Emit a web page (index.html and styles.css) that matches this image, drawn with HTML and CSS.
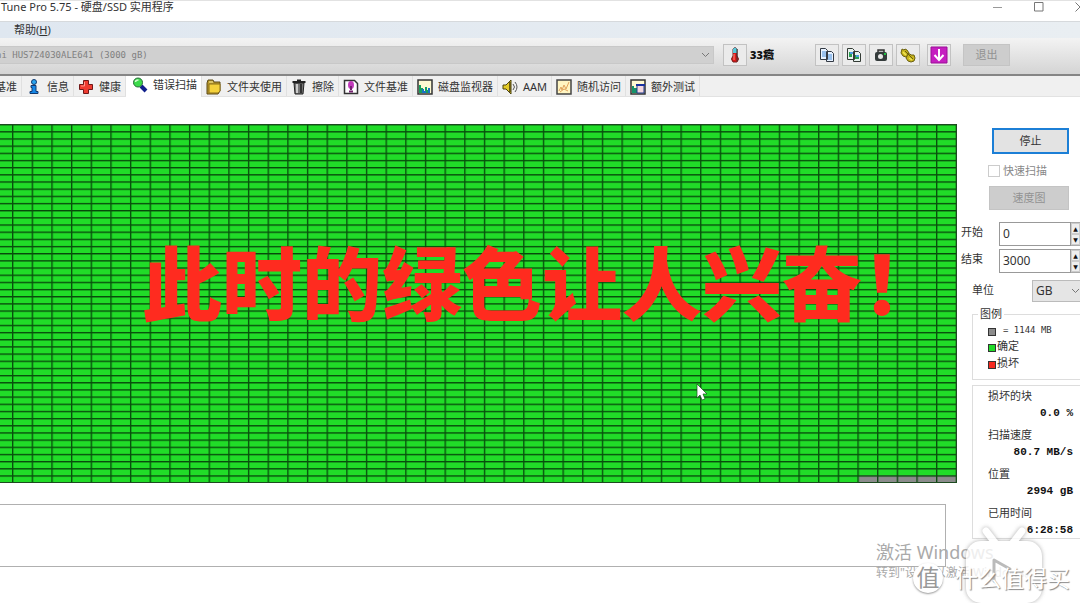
FILE: index.html
```html
<!DOCTYPE html>
<html lang="zh-CN">
<head>
<meta charset="utf-8">
<title>Tune Pro 5.75 - 硬盘/SSD 实用程序</title>
<link rel="stylesheet" href="styles.css">
</head>
<body>
<header class="titlebar">
  <span>Tune Pro 5.75 - 硬盘/SSD 实用程序</span>
  <div class="window-controls">
    <button aria-label="最小化"><svg width="10" height="12" viewBox="0 0 10 12"><path d="M0 6.500h9" stroke="#999"/></svg></button>
    <button aria-label="最大化"><svg width="10" height="12" viewBox="0 0 10 12"><path d="M.5 1.500h8.500v8.500H.5z" fill="none" stroke="#777"/></svg></button>
    <button aria-label="关闭"><svg width="10" height="12" viewBox="0 0 10 12"><path d="M.5 1.500l9 9M9.500 1.500l-9 9" stroke="#777"/></svg></button>
  </div>
</header>
<nav class="menubar"><a href="#help">帮助(<u>H</u>)</a></nav>
<div class="toolbar">
  <select class="drive" aria-label="驱动器" disabled><option>hi HUS724030ALE641 (3000 gB)</option></select>
  <button class="tool thermo" aria-label="温度"><svg width="16" height="18" viewBox="0 0 16 18"><path d="M6 3q2-3 4 0v7q3 3 0 6H6q-3-3 0-6z" fill="#e01818" stroke="#702020"/><path d="M6 3q2-3 4 0v4H6z" fill="#58c8d8"/><path d="M10 3v12" stroke="#333"/><path d="M7 8v6" stroke="#ff9080"/></svg></button>
  <b class="temp">33癓</b>
  <div class="tools">
    <button class="tool" aria-label="复制文本"><svg width="16" height="16" viewBox="0 0 16 16"><path d="M1.500 1.500h5l2 2v9h-7zM7.500 4.500h5l2 2v8h-7z" fill="#e8f2ff" stroke="#333a44"/><path d="M3 5h4M3 7h4M3 9h4M9 8h4M9 10h4M9 12h4" stroke="#4a90dc"/></svg></button>
    <button class="tool" aria-label="复制图像"><svg width="16" height="16" viewBox="0 0 16 16"><path d="M1.500 1.500h5l2 2v9h-7zM7.500 4.500h5l2 2v8h-7z" fill="#e8f2ee" stroke="#333a34"/><path d="M3 5h3v5H3zM9 8h4v4H9z" fill="#28a050"/><path d="M4 5h3v2H4zM10 8h3v2h-3z" fill="#4c9be0"/></svg></button>
    <button class="tool" aria-label="截图"><svg width="16" height="16" viewBox="0 0 16 16"><path d="M5 5V3h6v2" fill="#bbb" stroke="#333" stroke-width="1.500"/><rect x="2" y="5" width="12" height="9" rx="2" fill="#343b3b"/><circle cx="7.500" cy="9.500" r="2.500" fill="#e8e8e8"/><path d="M11 6h2v2h-2z" fill="#20c040"/></svg></button>
    <button class="tool" aria-label="选项"><svg width="16" height="16" viewBox="0 0 16 16"><g fill="#c8b51c" stroke="#6b6010"><path d="M2 2l2 1 1-1 2 1 2 3-1 3-2 1-3-1-2-3z"/><path d="M8 7l2 0 1 1 3 0 1 3-1 3-3 1-3-1-2-3z"/></g><path d="M3 5l3 3M9 11l3 2" stroke="#f0e558" stroke-width="1.500"/><path d="M5 4l5 5M10 9l3 3" stroke="#665c10"/></svg></button>
    <button class="tool save" aria-label="保存"><svg width="18" height="18" viewBox="0 0 18 18"><path d="M1 1h16v16H1z" fill="#c51fc0" stroke="#9b1097"/><path d="M9 3v10M4.500 9l4.500 5 4.500-5" fill="none" stroke="#fff" stroke-width="2"/></svg></button>
  </div>
  <button class="flat exit" disabled>退出</button>
</div>
<nav class="tabs">
  <button class="tab first">基准</button>
  <button class="tab"><svg viewBox="0 0 16 16"><circle cx="8" cy="3" r="2.500" fill="#2aa5f0" stroke="#123a70"/><path d="M5 6.500h5v6h2v2H4v-2h2v-4H5z" fill="#1688e8" stroke="#123a70"/></svg>信息</button>
  <button class="tab"><svg viewBox="0 0 16 16"><path d="M5.500 1.500h5v4h4v5h-4v4h-5v-4h-4v-5h4z" fill="#ee3b30" stroke="#701818"/><path d="M6.500 3v4H3" fill="none" stroke="#ff9688"/></svg>健康</button>
  <button class="tab active"><svg viewBox="0 0 16 16"><path d="M9 9l5 5" stroke="#10208c" stroke-width="4"/><circle cx="6" cy="5.500" r="4.500" fill="#3cdb4a" stroke="#28693a"/><path d="M3.500 5q0-2 3-2" fill="none" stroke="#d2ffd0" stroke-width="1.500"/></svg>错误扫描</button>
  <button class="tab"><svg viewBox="0 0 16 16"><path d="M1 4l1-3h5l1 2h6v9l-2 3H1z" fill="#b8982c" stroke="#5d4a17"/><path d="M3 5h11v7l-2 2H3z" fill="#f5d23b" stroke="#8b701c"/><path d="M3 3h4" stroke="#fff1a0"/></svg>文件夹使用</button>
  <button class="tab"><svg viewBox="0 0 16 16"><path d="M3 4h10l-1 11H4z" fill="#777" stroke="#222"/><path d="M1.500 3h13M6 1.500h4" stroke="#222" stroke-width="2"/><path d="M6 5v9" stroke="#ccc" stroke-width="2"/><path d="M10 5v9" stroke="#333" stroke-width="2"/></svg>擦除</button>
  <button class="tab"><svg viewBox="0 0 16 16"><path d="M1.500 1.500h10l3 3v10h-13z" fill="#fff" stroke="#333" stroke-width="1.500"/><ellipse cx="8" cy="6" rx="3" ry="4" fill="#c13bbb"/><path d="M8 7v4M6 12.500h4" stroke="#752270" stroke-width="2"/></svg>文件基准</button>
  <button class="tab"><svg viewBox="0 0 16 16"><path d="M1 1h14v14H1z" fill="#fff9d2" stroke="#333" stroke-width="1.500"/><path d="M2 14V6h2v3h2v5zM8 14V8h2v3h3v3z" fill="#17a05e"/><path d="M5 14v-4h2v2h2v2zM11 14V9h2v5z" fill="#1872c4"/></svg>磁盘监视器</button>
  <button class="tab"><svg viewBox="0 0 16 16"><path d="M1 6h3l5-5v14l-5-5H1z" fill="#e3ca27" stroke="#4b420d"/><path d="M8 3v10" stroke="#6a5b12" stroke-width="2"/><path d="M11 5q3 3 0 6M13 3q4 5 0 10" fill="none" stroke="#555"/></svg>AAM</button>
  <button class="tab"><svg viewBox="0 0 16 16"><path d="M1 1h14v14H1z" fill="#fff5c2" stroke="#444" stroke-width="1.500"/><path d="M3 12l2-4 1 3 2-5 2 4 3-7M4 13l4-3 4 2" fill="none" stroke="#e0a25b"/></svg>随机访问</button>
  <button class="tab"><svg viewBox="0 0 16 16"><path d="M1 1h14v14H1z" fill="#fff9d2" stroke="#333" stroke-width="1.500"/><path d="M2 14V7h2v2h3v5z" fill="#16936a"/><path d="M7 6h7v8H7z" fill="#f4d8df" stroke="#203d8c"/><path d="M6 6h9" stroke="#1830a0" stroke-width="2"/></svg>额外测试</button>
</nav>
<main class="main">
  <section class="scan">
    <div class="map">
      <svg class="blocks" viewBox="0 0 957 359" preserveAspectRatio="none" role="img" aria-label="扫描图">
        <defs><pattern id="cell" x="12" y="0" width="19.660" height="7.170" patternUnits="userSpaceOnUse"><path d="M.7 7.170V.7H19.660" fill="none" stroke="#07480b" stroke-width="1.300"/></pattern></defs>
        <path d="M0 0h957v359H0z" fill="#21dc28"/>
        <path d="M858.500 351.500H957V359h-98.500z" fill="#8c8c8c"/>
        <path d="M0 0h957v359H0z" fill="url(#cell)"/>
        <path d="M0 .5h956.500v358H0" fill="none" stroke="#1d4a20"/>
      </svg>
      <div class="caption">此时的绿色让人兴奋！</div>
      <svg class="cursor" width="12" height="18" viewBox="0 0 12 18"><path d="M1 1v14l3-3 2 5 3-1-2-5h4z" fill="#fff" stroke="#174d1a" stroke-width=".7"/></svg>
    </div>
    <div class="log"></div>
  </section>
  <aside class="side">
    <button class="stop">停止</button>
    <label class="quick"><input type="checkbox" disabled>快速扫描</label>
    <button class="flat speed" disabled>速度图</button>
    <div class="field"><label for="from">开始</label><input id="from" type="text" value="0"><span class="spin"><button aria-label="开始增加">▲</button><button aria-label="开始减少">▼</button></span></div>
    <div class="field"><label for="to">结束</label><input id="to" type="text" value="3000"><span class="spin"><button aria-label="结束增加">▲</button><button aria-label="结束减少">▼</button></span></div>
    <div class="field unit"><label for="unit">单位</label><select id="unit"><option>GB</option></select></div>
    <fieldset class="legend">
      <legend>图例</legend>
      <div><i class="gray"></i><span class="mono">= 1144 MB</span></div>
      <div><i class="green"></i>确定</div>
      <div><i class="red"></i>损坏</div>
    </fieldset>
    <dl class="stats">
      <dt>损坏的块</dt><dd>0.0 %</dd>
      <dt>扫描速度</dt><dd>80.7 MB/s</dd>
      <dt>位置</dt><dd>2994 gB</dd>
      <dt>已用时间</dt><dd>6:28:58</dd>
    </dl>
  </aside>
</main>
<div class="activate"><p>激活 Windows</p><small>转到"设置"以激活 Windows。</small></div>
<svg class="tv" width="92" height="82" viewBox="0 0 92 82"><g class="tv-body"><path d="M28 8l10 13M64 8L54 21" stroke="#fff" stroke-width="7" stroke-linecap="round"/><rect x="8" y="18" width="76" height="62" rx="15" fill="#fff"/></g><path d="M36 58V37l16 9" fill="none" stroke="#bbb" stroke-width="3" stroke-linecap="round" stroke-linejoin="round"/></svg>
<div class="brand"><span class="badge">值</span><span>什么值得买</span></div>
</body>
</html>
```
FILE: styles.css
```css
* { box-sizing: border-box; }
body {
  margin: 0;
  height: 100vh;
  overflow: hidden;
  position: relative;
  display: flex;
  flex-direction: column;
  background: #fff;
  color: #333;
  font: 11px/16px "Noto Sans", "Noto Sans CJK SC", sans-serif;
}
button, input, select { font: inherit; color: inherit; margin: 0; padding: 0; border-radius: 0; }
button { border: 0; background: none; }
svg { display: block; flex: none; }
select {
  appearance: none;
  background: url("data:image/svg+xml,%3Csvg xmlns='http://www.w3.org/2000/svg' width='9' height='6'%3E%3Cpath d='M1 1l3.500 3.500L8 1' fill='none' stroke='%23777'/%3E%3C/svg%3E") no-repeat right 0 center;
}

.titlebar {
  height: 21px;
  flex: none;
  display: flex;
  justify-content: space-between;
  padding-left: 1px;
  border-top: 1px solid #e2e2e2;
  line-height: 12px;
}
.window-controls { display: flex; gap: 31px; margin-right: -5px; height: 12px; }
.menubar {
  height: 17px;
  flex: none;
  padding-left: 14px;
  background: linear-gradient(90deg, #dfe7f0, #e9eef2);
  border-top: 1px solid #d6d9dc;
  line-height: 16px;
}
.menubar a { color: inherit; text-decoration: none; }
.toolbar {
  height: 38px;
  flex: none;
  display: flex;
  align-items: center;
  padding: 0 70px 2px 0;
  background: linear-gradient(#f3f3f3, #d4d4d4);
  border-bottom: 2px solid #858585;
}
.drive {
  flex: 1;
  height: 18px;
  margin-left: -10px;
  padding-left: 5px;
  border: 1px solid #c8c8c8;
  background-color: #d0d0d0;
  background-position: right 3px center;
  color: #808080;
  opacity: 1;
  font: 9px/16px "DejaVu Sans Mono", monospace;
}
.tool {
  width: 24px;
  height: 22px;
  display: grid;
  place-items: center;
  border: 1px solid #c2c2c2;
  background: #ebebeb;
}
.thermo { margin-left: 9px; }
.temp { width: 68px; padding-left: 3px; color: #111; font-weight: 900; }
.tools { display: flex; gap: 3px; }
.save { margin-left: 4px; }
.flat { background: #cdcdcd; border: 1px solid #c4c4c4; color: #929292; }
.exit { width: 47px; height: 22px; margin-left: 12px; }

.tabs {
  height: 21px;
  flex: none;
  display: flex;
  background: #f0f0f0;
  border-bottom: 1px solid #e2e2e2;
}
.tab {
  display: flex;
  align-items: center;
  gap: 5px;
  padding: 2px 4px 0 4px;
  border-right: 1px solid #e0e0e0;
  white-space: nowrap;
}
.tab svg { width: 16px; height: 16px; }
.first { margin-left: -9px; }
.active { height: 21px; padding: 0 4px 4px 6px; background: #fff; }

.main { flex: 1; min-height: 0; display: flex; }
.scan { flex: 1; min-width: 0; }
.map { position: relative; margin-top: 27px; }
.blocks { width: 100%; height: 359px; }
.caption {
  position: absolute;
  inset: 107px 0 auto 142px;
  color: #ff2b1f;
  font: 900 80px/96px "Noto Sans CJK SC", sans-serif;
  white-space: nowrap;
}
.cursor { position: absolute; left: 696px; top: 259px; }
.log { height: 63px; margin: 21px 11px 0 0; border: 1px solid #b0b0b0; border-left: 0; }

.side { width: 123px; flex: none; padding-top: 31px; overflow: hidden; }
.stop {
  display: block;
  width: 77px;
  height: 26px;
  margin-left: 35px;
  border: 2px solid #1c7fd6;
  background: #e3e3e3;
}
.quick { display: flex; align-items: center; gap: 3px; height: 16px; margin: 9px 0 7px 31px; color: #888; }
.quick input { appearance: none; width: 12px; height: 12px; border: 1px solid #ccc; background: #fff; }
.speed { display: block; width: 80px; height: 24px; margin-left: 32px; }
.field { display: flex; padding-left: 4px; height: 24px; margin-top: 3px; }
.speed + .field { margin-top: 12px; }
.field label { width: 38px; line-height: 20px; flex: none; }
.field input { width: 72px; padding-left: 3px; border: 1px solid #999; font-size: 12px; background: #fff; }
.spin { flex: 1; display: grid; border: 1px solid #aaa; border-width: 1px 0; }
.spin button { border: 1px solid #ccc; background: #eee; font: 6px/8px "DejaVu Sans", sans-serif; color: #111; overflow: hidden; }
.unit { padding-left: 15px; margin-top: 7px; height: 22px; }
.unit label { width: 60px; }
.unit select { flex: 1; min-width: 0; padding-left: 3px; border: 1px solid #bbb; border-right: 0; background-color: #e5e5e5; font-size: 12px; }
.legend { margin: 4px -5px 0 15px; height: 74px; border: 1px solid #ddd; padding: 1px 0 0 15px; min-width: 0; }
.legend legend { margin-left: -10px; padding: 0 2px; }
.legend div { display: flex; align-items: center; gap: 1px; height: 17px; }
.legend div:first-of-type { height: 14px; }
.legend i { width: 8px; height: 8px; margin-top: 4px; border: 1px solid #333; }
.gray { background: #8c8c8c; }
.green { background: #21dc28; }
.red { background: #f52a20; }
.mono { padding-left: 6px; font: 9px/14px "DejaVu Sans Mono", monospace; }
.stats { margin: 5px -5px 0 15px; padding: 2px 11px 0 15px; height: 154px; border: 1px solid #ddd; }
.stats dt { height: 17px; }
.stats dd { margin: 0; height: 22px; text-align: right; color: #111; font: bold 11px/16px "Liberation Mono", monospace; }

.activate { position: absolute; left: 876px; bottom: 21px; color: #aaa; white-space: nowrap; }
.activate p { margin: 0; font-size: 18px; line-height: 24px; }
.activate small { display: block; font-size: 12px; line-height: 18px; }
.tv { position: absolute; left: 958px; bottom: -2px; }
.tv-body { filter: drop-shadow(0 0 2px #999); opacity: .8; }
.brand {
  position: absolute;
  left: 913px;
  bottom: 9px;
  display: flex;
  align-items: center;
  gap: 12px;
  color: #fff;
  font-size: 23px;
  line-height: 32px;
  text-shadow: 1px 1px 1px #888;
  white-space: nowrap;
}
.badge {
  width: 30px;
  height: 30px;
  border-radius: 50%;
  background: #fff;
  box-shadow: 0 1px 2px #999;
  color: #999;
  text-shadow: none;
  text-align: center;
  line-height: 28px;
}
```
